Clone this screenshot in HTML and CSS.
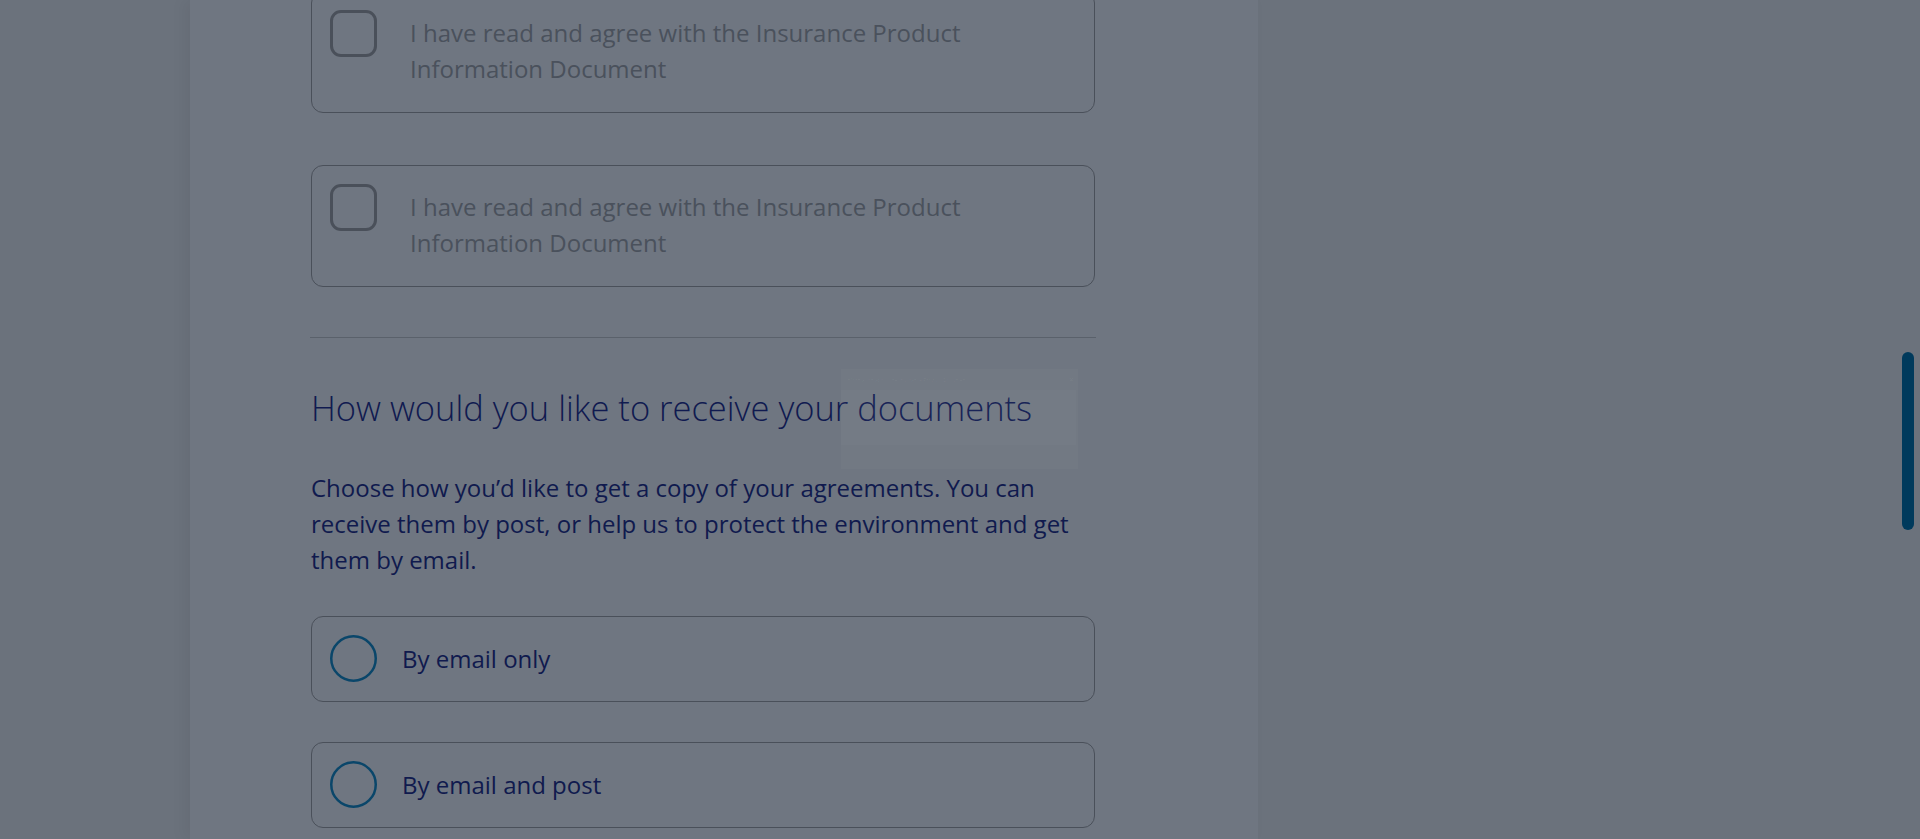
FILE: index.html
```html
<!DOCTYPE html>
<html lang="en">
<head>
<meta charset="utf-8">
<title>Documents</title>
<link rel="stylesheet" href="styles.css">
</head>
<body>
<div class="page">
  <main class="panel">
    <div class="content">
      <label class="option option-check first">
        <span class="checkbox"></span>
        <span class="option-text">I have read and agree with the Insurance Product Information Document</span>
      </label>
      <label class="option option-check">
        <span class="checkbox"></span>
        <span class="option-text">I have read and agree with the Insurance Product Information Document</span>
      </label>

      <hr class="divider">

      <h2 class="heading">How would you like to receive your documents</h2>
      <p class="intro">Choose how you’d like to get a copy of your agreements. You can receive them by post, or help us to protect the environment and get them by email.</p>

      <label class="option option-radio">
        <svg class="radio" viewBox="0 0 47 47" width="47" height="47"><circle cx="23.5" cy="23.5" r="22.25" fill="none" stroke="#0a466a" stroke-width="2.5"/></svg>
        <span class="radio-text">By email only</span>
      </label>
      <label class="option option-radio">
        <svg class="radio" viewBox="0 0 47 47" width="47" height="47"><circle cx="23.5" cy="23.5" r="22.25" fill="none" stroke="#0a466a" stroke-width="2.5"/></svg>
        <span class="radio-text">By email and post</span>
      </label>
    </div>
  </main>
</div>

<div class="ghost-tip">
  <div class="ghost-head"><span class="ghost-title">Information about the Insurance Product Document</span><span class="ghost-close">×</span></div>
  <div class="ghost-body"></div>
</div>

<div class="scroll-thumb"></div>
</body>
</html>
```
FILE: styles.css
```css
html, body {
  margin: 0;
  padding: 0;
  height: 839px;
  overflow: hidden;
}

body {
  background: #6b727c;
  font-family: "Open Sans", "Noto Sans", sans-serif;
  color: #111a4f;
}

.page {
  display: flex;
  padding-left: 190px;
  height: 839px;
}

.panel {
  width: 1068px;
  background: #6f7681;
  box-shadow: -6px 0 14px rgba(0, 0, 0, 0.05);
  padding-left: 121px;
  box-sizing: border-box;
}

.content {
  width: 784px;
  display: flex;
  flex-direction: column;
}

.option {
  display: flex;
  box-sizing: border-box;
  border: 1px solid #4a505a;
  border-radius: 12px;
  width: 784px;
}

.option-check {
  align-items: flex-start;
  padding: 18px 24px 25px 18px;
  margin-bottom: 52px;
}

.option-check.first {
  margin-top: -9px;
}

.option-check + .option-check {
  margin-bottom: 0;
}

.checkbox {
  flex: none;
  width: 47px;
  height: 47px;
  box-sizing: border-box;
  border: 3px solid #4a505a;
  border-radius: 11px;
}

.option-text {
  margin-top: 5px;
  margin-left: 33px;
  font-size: 24px;
  line-height: 36px;
  color: #4a515c;
}

.divider {
  margin: 50px 0 0 -1px;
  width: 786px;
  border: 0;
  border-top: 1px solid #5a616b;
  height: 0;
}

.heading {
  margin: 48px 0 0;
  font-size: 34.5px;
  font-weight: 300;
  line-height: 44px;
  color: #101a50;
  letter-spacing: 0;
}

.intro {
  margin: 39.5px 0 38px;
  font-size: 24px;
  line-height: 36px;
  color: #101a4e;
}

.option-radio {
  align-items: center;
  padding: 0 18px;
  height: 86px;
  margin-bottom: 40px;
}

.radio {
  flex: none;
  display: block;
  width: 47px;
  height: 47px;
}

.radio-text {
  margin-left: 25px;
  font-size: 24px;
  line-height: 36px;
  color: #101a4e;
}

.ghost-tip {
  position: absolute;
  left: 841px;
  top: 369px;
  width: 237px;
  height: 100px;
  background: rgba(255, 255, 255, 0.025);
  display: flex;
  flex-direction: column;
}

.ghost-head {
  display: flex;
  justify-content: space-between;
  align-items: center;
  height: 21px;
  padding: 0 4px 0 5px;
  font-size: 5px;
  color: rgba(255, 255, 255, 0.05);
}

.ghost-close {
  font-size: 9px;
}

.ghost-body {
  height: 55px;
  margin-right: 2px;
  background: rgba(255, 255, 255, 0.02);
}

.scroll-thumb {
  position: absolute;
  left: 1902px;
  top: 352px;
  width: 12px;
  height: 178px;
  border-radius: 6px;
  background: #003a5c;
}
```
